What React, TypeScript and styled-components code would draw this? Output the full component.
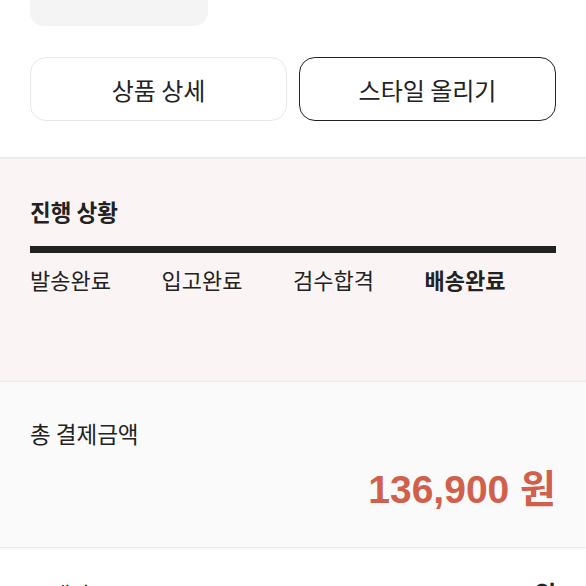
import styled, { createGlobalStyle } from 'styled-components';

const GlobalStyle = createGlobalStyle`
  * { box-sizing: border-box; }
  body {
    margin: 0;
    background: #fff;
    color: #222;
    font-family: 'Noto Sans CJK KR', 'Noto Sans', sans-serif;
  }
`;

const steps = [
  { label: '발송완료', current: false },
  { label: '입고완료', current: false },
  { label: '검수합격', current: false },
  { label: '배송완료', current: true },
];

const App = () => {
  return (
    <S.Page>
      <GlobalStyle />
      <S.ProductRow>
        <S.Thumb />
        <S.ProductInfo>
          <S.ProductName>나이키 덩크 로우</S.ProductName>
        </S.ProductInfo>
      </S.ProductRow>

      <S.ButtonRow>
        <S.ActionButton>상품 상세</S.ActionButton>
        <S.ActionButton $outlined>스타일 올리기</S.ActionButton>
      </S.ButtonRow>

      <S.ProgressSection>
        <S.SectionTitle>진행 상황</S.SectionTitle>
        <S.ProgressBar />
        <S.StepList>
          {steps.map((step) => (
            <S.Step key={step.label} $current={step.current}>
              {step.label}
            </S.Step>
          ))}
        </S.StepList>
      </S.ProgressSection>

      <S.TotalSection>
        <S.TotalLabel>총 결제금액</S.TotalLabel>
        <S.TotalPrice>
          136,900 <S.Won>원</S.Won>
        </S.TotalPrice>
      </S.TotalSection>

      <S.DetailSection>
        <S.DetailRow>
          <S.DetailLabel>구매가</S.DetailLabel>
          <S.DetailValue>132,000원</S.DetailValue>
        </S.DetailRow>
      </S.DetailSection>
    </S.Page>
  );
};

export default App;

const S = {
  Page: styled.main`
    width: 586px;
    height: 586px;
    overflow: hidden;
    display: flex;
    flex-direction: column;
  `,
  ProductRow: styled.section`
    display: flex;
    gap: 28px;
    padding: 0 30px;
    margin-top: -152px;
  `,
  Thumb: styled.div`
    width: 178px;
    height: 178px;
    flex-shrink: 0;
    border-radius: 14px;
    background: #f4f4f4;
  `,
  ProductInfo: styled.div`
    display: flex;
    flex-direction: column;
    justify-content: flex-end;
    padding-bottom: 28px;
  `,
  ProductName: styled.p`
    margin: 0;
    font-size: 22px;
    line-height: 24px;
    color: #222;
  `,
  ButtonRow: styled.div`
    display: grid;
    grid-template-columns: 1fr 1fr;
    gap: 12px;
    padding: 0 30px;
    margin-top: 31px;
  `,
  ActionButton: styled.button<{ $outlined?: boolean }>`
    height: 64px;
    border-radius: 16px;
    background: #fff;
    border: ${({ $outlined }) => ($outlined ? '1.5px solid #222' : '1px solid #e8e8e8')};
    font-family: 'Noto Sans CJK KR', sans-serif;
    font-size: 24px;
    font-weight: 400;
    color: #222;
    cursor: pointer;
  `,
  ProgressSection: styled.section`
    margin-top: 36px;
    height: 225px;
    flex-shrink: 0;
    background: #faf5f4;
    border-top: 2px solid #ececec;
    border-bottom: 1px solid #eeeaea;
    padding: 37px 30px 0;
  `,
  SectionTitle: styled.h3`
    margin: 0;
    font-size: 22.5px;
    font-weight: 700;
    line-height: 30px;
    color: #222;
  `,
  ProgressBar: styled.div`
    margin-top: 20px;
    height: 7px;
    background: #222;
  `,
  StepList: styled.div`
    display: grid;
    grid-template-columns: repeat(4, 1fr);
    margin-top: 9px;
  `,
  Step: styled.span<{ $current: boolean }>`
    font-size: 22px;
    line-height: 34px;
    font-weight: ${({ $current }) => ($current ? 700 : 400)};
    color: #222;
  `,
  TotalSection: styled.section`
    height: 166px;
    flex-shrink: 0;
    background: #fafafa;
    border-bottom: 1px solid #ececec;
    box-shadow: 0 1px 2px rgba(0, 0, 0, 0.04);
    padding: 36px 30px 0;
    display: flex;
    flex-direction: column;
  `,
  TotalLabel: styled.p`
    margin: 0;
    font-size: 22.5px;
    line-height: 30px;
    color: #222;
  `,
  TotalPrice: styled.p`
    margin: 16px 0 0;
    align-self: flex-end;
    font-family: 'Liberation Sans', 'Noto Sans CJK KR', sans-serif;
    font-size: 39px;
    line-height: 44px;
    font-weight: 700;
    color: #d0604c;
  `,
  Won: styled.span`
    font-family: 'Noto Sans CJK KR', sans-serif;
  `,
  DetailSection: styled.section`
    padding: 27px 30px 0;
  `,
  DetailRow: styled.div`
    display: flex;
    justify-content: space-between;
    align-items: baseline;
  `,
  DetailLabel: styled.span`
    font-size: 22px;
    line-height: 30px;
    color: #222;
  `,
  DetailValue: styled.span`
    font-family: 'Liberation Sans', 'Noto Sans CJK KR', sans-serif;
    font-size: 24px;
    font-weight: 700;
    color: #222;
  `,
};
